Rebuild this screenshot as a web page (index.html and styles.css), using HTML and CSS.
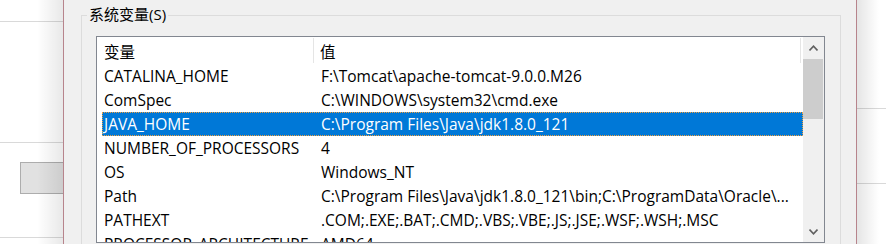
FILE: index.html
```html
<!DOCTYPE html>
<html lang="zh-CN">
  <head>
    <meta charset="UTF-8" />
    <title>环境变量</title>
    <link rel="stylesheet" href="styles.css">
  </head>
  <body>
    <div class="back back-left">
      <div class="rule rule-top"></div>
      <div class="rule rule-mid"></div>
      <div class="back-btn"></div>
      <div class="rule rule-bottom"></div>
    </div>

    <div class="dialog">
      <div class="group">
        <span class="group-title">系统变量(S)</span>
        <div class="listbox">
          <div class="list">
            <div class="row head">
              <div class="cell name">变量</div>
              <div class="cell value">值</div>
            </div>
            <div class="row">
              <div class="cell name">CATALINA_HOME</div>
              <div class="cell value">F:\Tomcat\apache-tomcat-9.0.0.M26</div>
            </div>
            <div class="row">
              <div class="cell name">ComSpec</div>
              <div class="cell value">C:\WINDOWS\system32\cmd.exe</div>
            </div>
            <div class="row selected">
              <div class="cell name">JAVA_HOME</div>
              <div class="cell value">C:\Program Files\Java\jdk1.8.0_121</div>
            </div>
            <div class="row">
              <div class="cell name">NUMBER_OF_PROCESSORS</div>
              <div class="cell value">4</div>
            </div>
            <div class="row">
              <div class="cell name">OS</div>
              <div class="cell value">Windows_NT</div>
            </div>
            <div class="row">
              <div class="cell name">Path</div>
              <div class="cell value">C:\Program Files\Java\jdk1.8.0_121\bin;C:\ProgramData\Oracle\...</div>
            </div>
            <div class="row">
              <div class="cell name">PATHEXT</div>
              <div class="cell value">.COM;.EXE;.BAT;.CMD;.VBS;.VBE;.JS;.JSE;.WSF;.WSH;.MSC</div>
            </div>
            <div class="row">
              <div class="cell name">PROCESSOR_ARCHITECTURE</div>
              <div class="cell value">AMD64</div>
            </div>
          </div>
          <div class="scrollbar">
            <div class="scroll-btn">
              <svg width="9" height="6" viewBox="0 0 9 6"><polyline points="0.5,5.5 4.5,1.2 8.5,5.5" fill="none" stroke="#606060" stroke-width="1.6"/></svg>
            </div>
            <div class="thumb"></div>
            <div class="track"></div>
            <div class="scroll-btn">
              <svg width="9" height="6" viewBox="0 0 9 6"><polyline points="0.5,0.5 4.5,4.8 8.5,0.5" fill="none" stroke="#606060" stroke-width="1.6"/></svg>
            </div>
          </div>
        </div>
      </div>
    </div>

    <div class="back back-right">
      <div class="rule rule-r1"></div>
      <div class="rule rule-r2"></div>
    </div>
  </body>
</html>
```

FILE: styles.css
```css
body {
  margin: 0;
  display: flex;
  height: 244px;
  overflow: hidden;
  background-color: #fff;
  font-family: "Open Sans", "Noto Sans CJK SC", sans-serif;
  font-size: 15.5px;
  color: #000;
}

/* windows behind the dialog */

.back {
  position: relative;
  background-color: #fff;
  overflow: hidden;
}

.back-left {
  width: 63px;
  flex-shrink: 0;
}

.back-left::after {
  content: "";
  position: absolute;
  top: 0;
  right: 0;
  bottom: 0;
  width: 26px;
  background: linear-gradient(to right, rgba(0, 0, 0, 0), rgba(0, 0, 0, 0.09));
}

.back-right {
  flex: 1;
}

.back-right::after {
  content: "";
  position: absolute;
  top: 0;
  left: 0;
  bottom: 0;
  width: 22px;
  background: linear-gradient(to left, rgba(0, 0, 0, 0), rgba(0, 0, 0, 0.1));
}

.rule {
  height: 1px;
  background-color: #d9d9d9;
}

.rule-top {
  margin-top: 21px;
}

.rule-mid {
  margin-top: 120px;
}

.back-btn {
  margin: 19px 0 0 20px;
  height: 32px;
  box-sizing: border-box;
  border: 1px solid #adadad;
  border-right: none;
  background-color: #e1e1e1;
}

.rule-bottom {
  margin-top: 43px;
}

.rule-r1 {
  margin-top: 108px;
}

.rule-r2 {
  margin-top: 74px;
}

/* dialog */

.dialog {
  width: 794px;
  flex-shrink: 0;
  box-sizing: border-box;
  border-left: 1px solid #b7848c;
  border-right: 1px solid #b7848c;
  background-color: #f0f0f0;
  padding: 15px 0 0 17px;
}

.group {
  position: relative;
  width: 760px;
  height: 240px;
  box-sizing: border-box;
  border: 1px solid #dcdcdc;
  border-bottom: none;
  padding: 20px 0 0 14px;
}

.group-title {
  position: absolute;
  top: -11px;
  left: 5px;
  padding: 0 2px;
  font-size: 15px;
  line-height: 18px;
  background-color: #f0f0f0;
}

.listbox {
  display: flex;
  width: 729px;
  height: 207px;
  box-sizing: border-box;
  border: 1px solid #828790;
  background-color: #fff;
}

.list {
  width: 706px;
  padding-left: 5px;
  box-sizing: border-box;
  overflow: hidden;
}

.row {
  display: flex;
  height: 24px;
  line-height: 24px;
  white-space: nowrap;
}

.cell {
  overflow: hidden;
  box-sizing: border-box;
}

.cell.name {
  width: 212px;
  padding-left: 2px;
}

.cell.value {
  flex: 1;
  padding-left: 7px;
}

.head {
  height: 27px;
}

.head .cell {
  height: 25px;
  margin-top: 1px;
  padding-top: 2px;
  border-right: 1px solid #e5e5e5;
}

.head .cell.value {
  flex: none;
  width: 487px;
  padding-left: 6px;
}

.selected {
  background-color: #0078d7;
  color: #fff;
  outline: 1px dotted #f0a040;
  outline-offset: -1px;
}

.scrollbar {
  width: 21px;
  display: flex;
  flex-direction: column;
  background-color: #f0f0f0;
}

.scroll-btn {
  height: 21px;
  display: flex;
  align-items: center;
  justify-content: center;
  padding-right: 1px;
}

.thumb {
  height: 60px;
  margin: 1px 1px 0 0;
  background-color: #cdcdcd;
}

.track {
  flex: 1;
}
```
